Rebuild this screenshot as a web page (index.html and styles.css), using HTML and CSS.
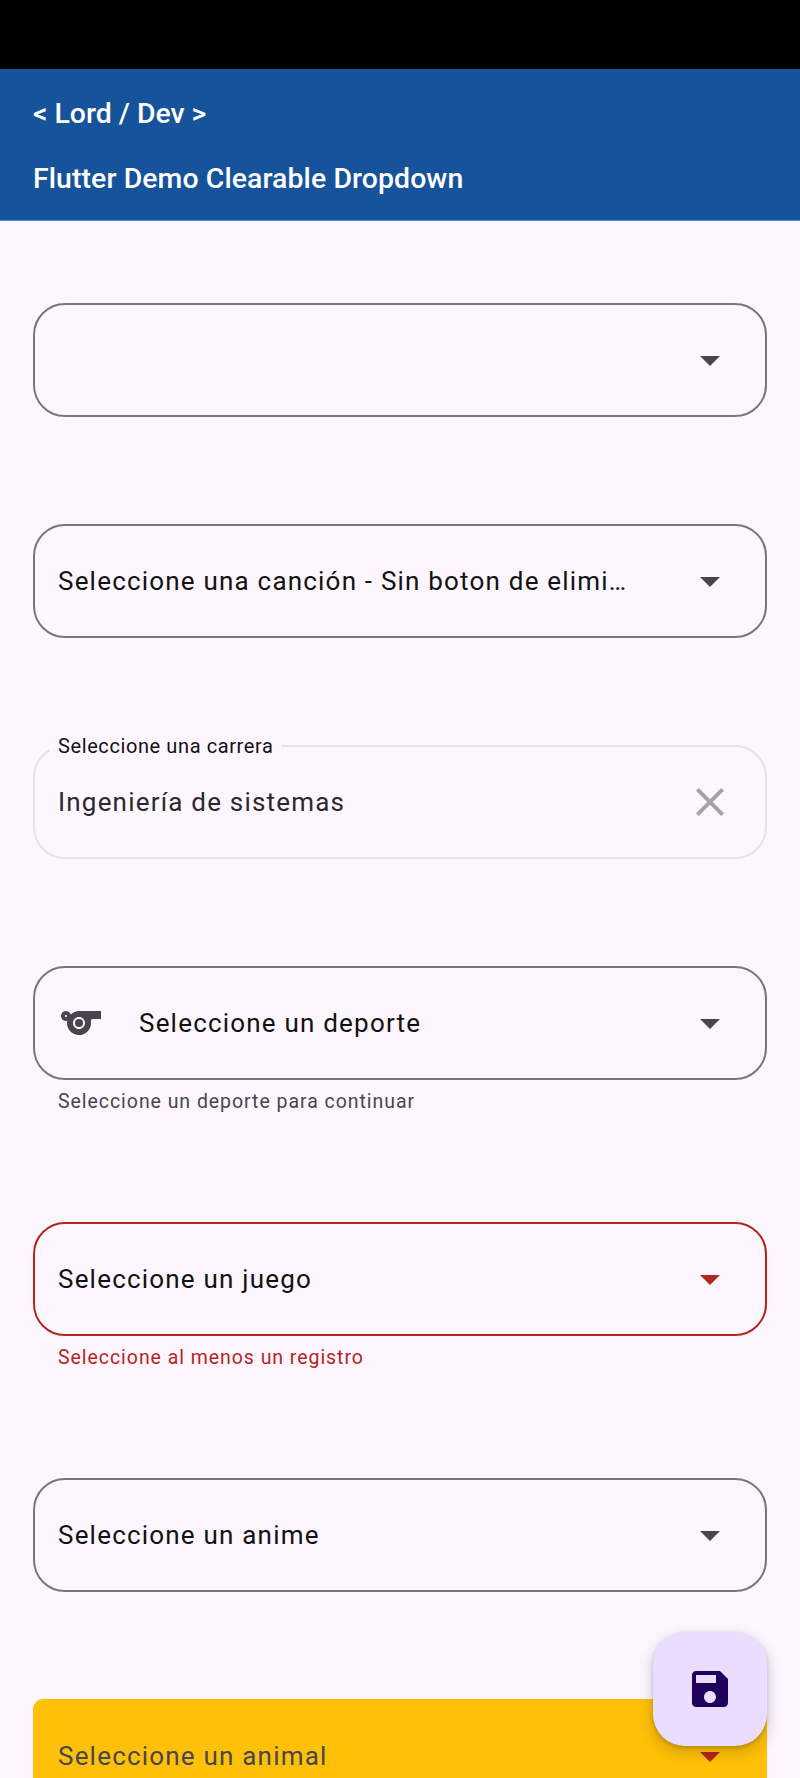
FILE: index.html
```html
<!DOCTYPE html>
<html lang="en">

<head>
    <meta charset="UTF-8">
    <meta name="viewport" content="width=device-width, initial-scale=1.0">
    <title>Flutter Demo Clearable Dropdown</title>
    <link rel="stylesheet" href="styles.css">
</head>

<body>
    <div class="status-bar"></div>

    <header class="app-bar">
        <p class="app-brand">&lt; Lord / Dev &gt;</p>
        <h1 class="app-title">Flutter Demo Clearable Dropdown</h1>
    </header>

    <main class="form">
        <!-- Empty dropdown -->
        <div class="field-group">
            <div class="field">
                <span class="field-text"></span>
                <svg class="field-icon" viewBox="0 0 24 24"><path d="M7 10l5 5 5-5z"/></svg>
            </div>
        </div>

        <div class="field-group">
            <div class="field">
                <span class="field-text">Seleccione una canción - Sin boton de eliminar</span>
                <svg class="field-icon" viewBox="0 0 24 24"><path d="M7 10l5 5 5-5z"/></svg>
            </div>
        </div>

        <!-- Disabled dropdown with floating label -->
        <div class="field-group">
            <div class="field field-disabled">
                <span class="field-label">Seleccione una carrera</span>
                <span class="field-text">Ingeniería de sistemas</span>
                <svg class="field-icon" viewBox="0 0 24 24"><path d="M19 6.41 17.59 5 12 10.59 6.41 5 5 6.41 10.59 12 5 17.59 6.41 19 12 13.41 17.59 19 19 17.59 13.41 12z"/></svg>
            </div>
        </div>

        <div class="field-group">
            <div class="field field-prefixed">
                <svg class="prefix-icon" viewBox="0 0 24 24">
                    <path d="M11.23 6C9.57 6 8.01 6.66 6.87 7.73 6.54 6.73 5.61 6 4.5 6 3.12 6 2 7.12 2 8.5S3.12 11 4.5 11c.21 0 .41-.03.61-.08-.05.25-.09.51-.1.78-.18 3.68 2.95 6.68 6.68 6.27 2.55-.28 4.68-2.26 5.19-4.77.15-.71.15-1.4.06-2.06-.09-.6.38-1.13.99-1.13H22V6H11.23zM4.5 9C4.22 9 4 8.78 4 8.5S4.22 8 4.5 8s.5.22.5.5-.22.5-.5.5zM11 15c-1.66 0-3-1.34-3-3s1.34-3 3-3 3 1.34 3 3-1.34 3-3 3z"/>
                    <circle cx="11" cy="12" r="2"/>
                </svg>
                <span class="field-text">Seleccione un deporte</span>
                <svg class="field-icon" viewBox="0 0 24 24"><path d="M7 10l5 5 5-5z"/></svg>
            </div>
            <p class="field-helper">Seleccione un deporte para continuar</p>
        </div>

        <div class="field-group">
            <div class="field field-error">
                <span class="field-text">Seleccione un juego</span>
                <svg class="field-icon" viewBox="0 0 24 24"><path d="M7 10l5 5 5-5z"/></svg>
            </div>
            <p class="field-helper">Seleccione al menos un registro</p>
        </div>

        <div class="field-group">
            <div class="field">
                <span class="field-text">Seleccione un anime</span>
                <svg class="field-icon" viewBox="0 0 24 24"><path d="M7 10l5 5 5-5z"/></svg>
            </div>
        </div>

        <div class="field-group">
            <div class="field field-filled">
                <span class="field-text">Seleccione un animal</span>
                <svg class="field-icon" viewBox="0 0 24 24"><path d="M7 10l5 5 5-5z"/></svg>
            </div>
        </div>
    </main>

    <button class="fab" aria-label="Guardar">
        <svg viewBox="0 0 24 24"><path d="M17 3H5c-1.11 0-2 .9-2 2v14c0 1.1.89 2 2 2h14c1.1 0 2-.9 2-2V7l-4-4zm-5 16c-1.66 0-3-1.34-3-3s1.34-3 3-3 3 1.34 3 3-1.34 3-3 3zm3-10H5V5h10v4z"/></svg>
    </button>
</body>

</html>
```
FILE: styles.css
```css
html, body {
    height: 1778px;
    overflow: hidden;
}

body {
    font-family: 'Roboto', sans-serif;
    margin: 0;
    padding: 0;
    background-color: #fef6ff;
    color: #1d1b20;
}

.status-bar {
    height: 69px;
    background-color: #000;
}

/* App bar */
.app-bar {
    height: 151px;
    padding: 0 33px;
    background-color: #16539b;
    border-bottom: 1px solid #4a8ad4;
    color: #fff;
    font-size: 28.4px;
    font-weight: 500;
}

.app-brand {
    margin: 0;
    padding-top: 30px;
    line-height: 30px;
}

.app-title {
    margin: 0;
    padding-top: 35px;
    font-size: 28.4px;
    font-weight: 500;
    letter-spacing: 0.1px;
    line-height: 30px;
}

/* Dropdown fields */
.form {
    padding: 82px 33px 0;
}

.field-group {
    margin-bottom: 107px;
}

.field-group:has(.field-helper) {
    margin-bottom: 0;
    height: 256px;
}

.field {
    position: relative;
    display: flex;
    align-items: center;
    box-sizing: border-box;
    height: 114px;
    padding: 0 31px 0 23px;
    border: 2px solid #79747e;
    border-radius: 32px;
}

.field-text {
    flex: 1;
    min-width: 0;
    margin-right: 50px;
    overflow: hidden;
    white-space: nowrap;
    text-overflow: ellipsis;
    font-size: 26px;
    letter-spacing: 1.2px;
    color: #111;
}

.field-icon {
    flex: none;
    width: 48px;
    height: 48px;
    fill: #49454f;
}

.prefix-icon {
    flex: none;
    width: 48px;
    height: 48px;
    margin: 0 34px 0 0;
    fill: #49454f;
}

.field-prefixed {
    padding-left: 22px;
}

.field-disabled {
    border-color: #e6e0e9;
}

.field-disabled .field-text {
    color: #2a282e;
}

.field-disabled .field-icon {
    fill: #a5a2a8;
}

.field-label {
    position: absolute;
    top: -12px;
    left: 15px;
    padding: 0 8px;
    background-color: #fef6ff;
    font-size: 20px;
    line-height: 22px;
    letter-spacing: 0.6px;
    color: #111;
}

.field-error {
    border-color: #b3261e;
}

.field-error .field-icon {
    fill: #b3261e;
}

.field-error + .field-helper {
    color: #b3261e;
}

.field-filled {
    border: none;
    border-radius: 10px;
    background-color: #ffc107;
    padding-left: 25px;
    padding-right: 33px;
}

.field-filled .field-text {
    color: #49454f;
}

.field-filled .field-icon {
    fill: #b3261e;
}

.field-helper {
    margin: 11px 0 0 25px;
    font-size: 19.5px;
    line-height: 22px;
    letter-spacing: 0.95px;
    color: #49454f;
}

/* Floating save button */
.fab {
    position: fixed;
    top: 1632px;
    left: 653px;
    display: flex;
    align-items: center;
    justify-content: center;
    width: 114px;
    height: 114px;
    padding: 0;
    border: none;
    border-radius: 32px;
    background-color: #eaddff;
    box-shadow: 0 6px 12px 4px rgba(0, 0, 0, 0.12), 0 2px 4px rgba(0, 0, 0, 0.18);
}

.fab svg {
    width: 48px;
    height: 48px;
    fill: #21005d;
}
```
